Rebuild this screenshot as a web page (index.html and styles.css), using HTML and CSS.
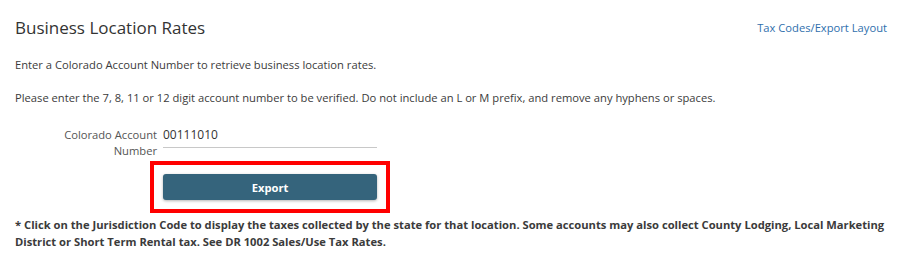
FILE: index.html
```html
<!DOCTYPE html>
<html>
<head>
<meta charset="utf-8">
<link rel="stylesheet" href="styles.css">
</head>
<body>
<div class="page">
  <div class="header">
    <h1 class="title">Business Location Rates</h1>
    <a class="link" href="#">Tax Codes/Export Layout</a>
  </div>
  <p class="intro">Enter a Colorado Account Number to retrieve business location rates.</p>
  <p class="intro second">Please enter the 7, 8, 11 or 12 digit account number to be verified. Do not include an L or M prefix, and remove any hyphens or spaces.</p>
  <div class="form-row">
    <label class="label">Colorado Account Number</label>
    <div class="field">00111010</div>
  </div>
  <div class="button-row">
    <div class="highlight">
      <button class="export">Export</button>
    </div>
  </div>
  <p class="note">* Click on the Jurisdiction Code to display the taxes collected by the state for that location. Some accounts may also collect County Lodging, Local Marketing District or Short Term Rental tax. See DR 1002 Sales/Use Tax Rates.</p>
</div>
</body>
</html>
```
FILE: styles.css
```css
html, body {
  margin: 0;
  padding: 0;
  background: #ffffff;
}
body {
  font-family: "Open Sans", "Noto Sans", sans-serif;
  color: #3b3b3b;
  font-size: 11.2px;
}
.page {
  padding: 12px 13px 0 15px;
}
.header {
  display: flex;
  justify-content: space-between;
  align-items: flex-start;
}
.title {
  margin: 0;
  font-size: 17px;
  font-weight: 400;
  line-height: 32px;
  color: #333;
}
.link {
  color: #2f6fad;
  text-decoration: none;
  font-size: 11.2px;
  line-height: 32px;
}
.intro {
  margin: 13px 0 0;
  line-height: 16px;
}
.intro.second {
  margin-top: 17px;
}
.form-row {
  display: flex;
  margin-top: 21px;
  gap: 6px;
}
.label {
  width: 100px;
  margin-left: 42px;
  text-align: right;
  line-height: 16px;
  color: #555;
}
.field {
  width: 214px;
  border-bottom: 1px solid #c8c8c8;
  font-size: 12px;
  height: 20px;
  line-height: 16px;
  color: #333;
}
.button-row {
  display: flex;
  padding-left: 135px;
  margin-top: 2px;
}
.highlight {
  border: 4px solid #ff0000;
  padding: 9px 9px;
}
.export {
  display: block;
  width: 214px;
  height: 26px;
  background: #35647c;
  color: #fff;
  border: none;
  border-radius: 3px;
  font-family: inherit;
  font-weight: 700;
  font-size: 11.2px;
  box-shadow: 0 1px 3px rgba(0,0,0,0.3);
}
.note {
  margin: 4px 0 0;
  font-weight: 700;
  line-height: 16.5px;
  color: #3b3b3b;
}
```
